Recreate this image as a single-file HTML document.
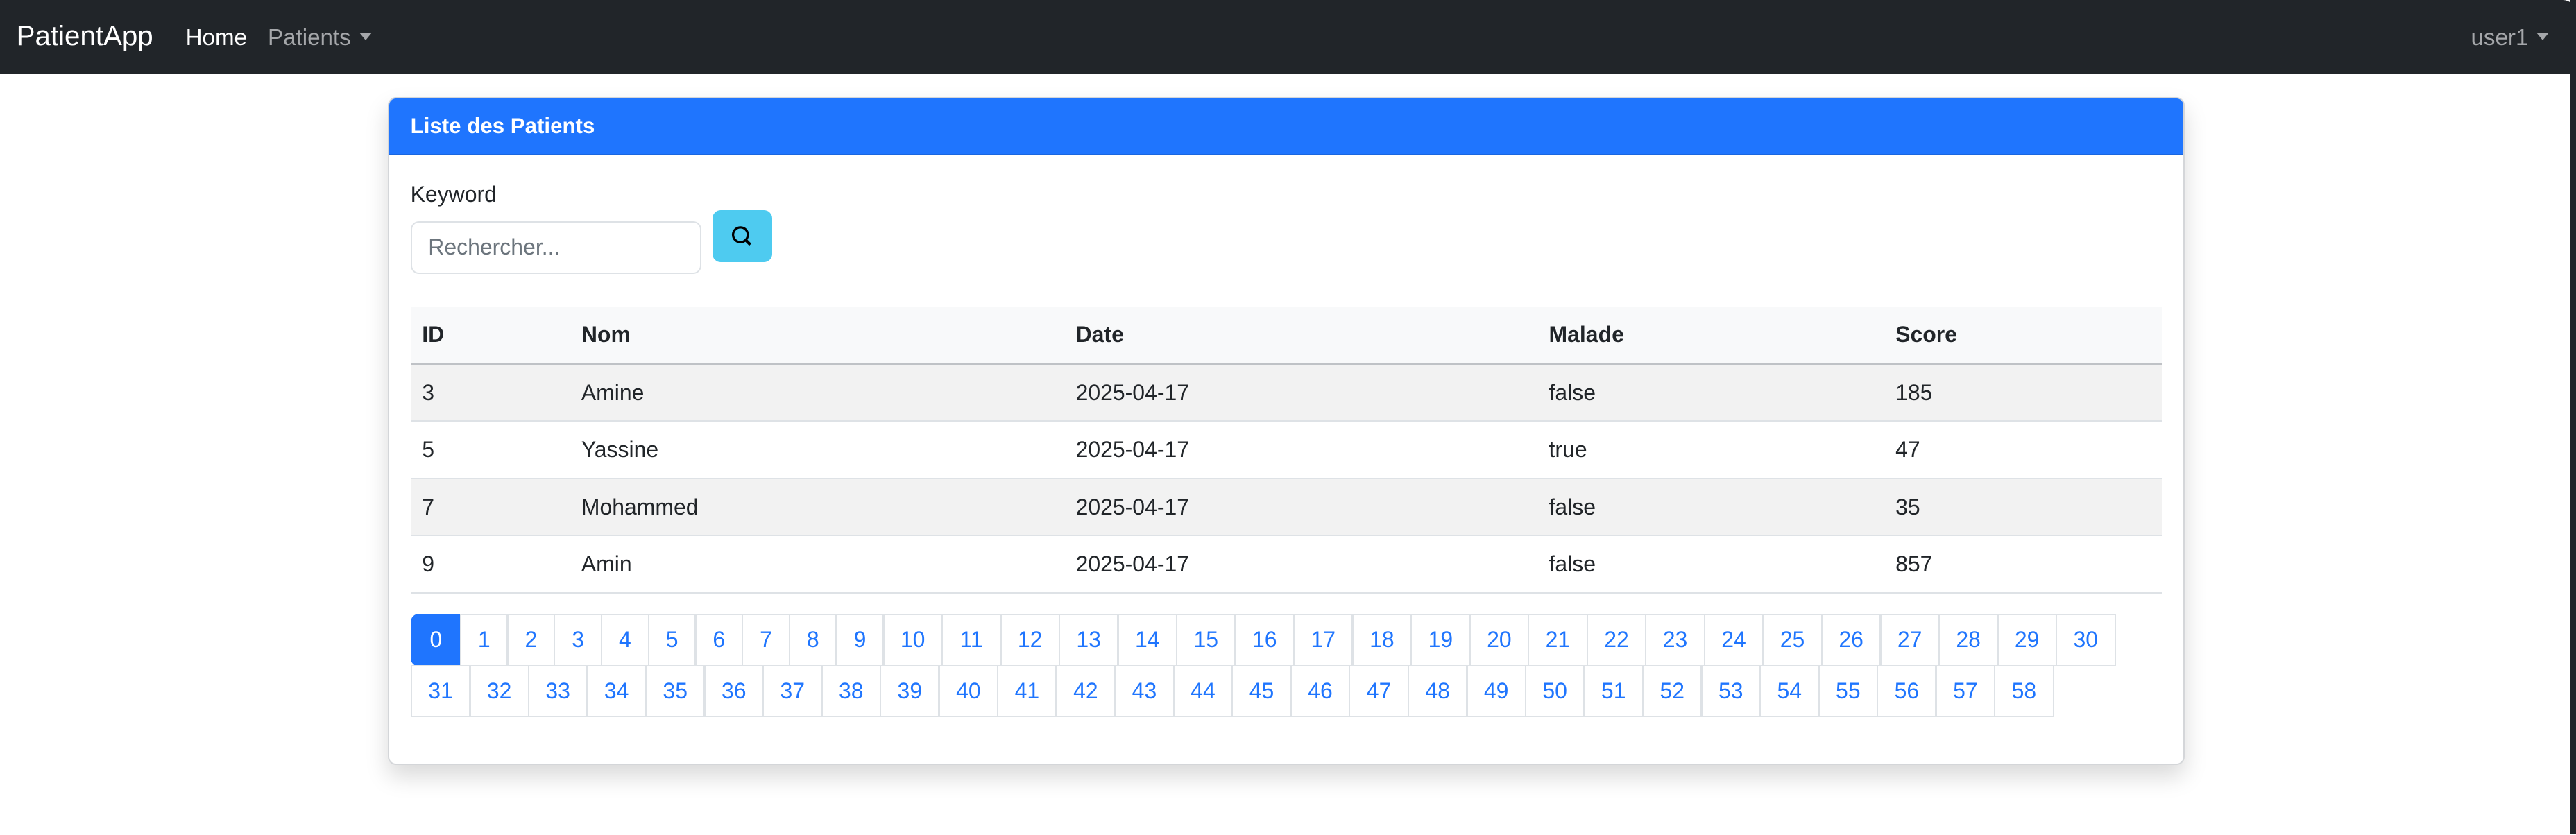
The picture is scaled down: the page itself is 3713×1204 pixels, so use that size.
<!DOCTYPE html>
<html><head><meta charset="utf-8"><style>
html,body{margin:0;padding:0;}
body{width:1568px;height:508px;zoom:2.368;overflow:hidden;background:#fff;font-family:"Liberation Sans",Arial,sans-serif;font-size:14px;color:#212529;position:relative;}
.nav{height:45px;background:#212529;position:relative;border-top-right-radius:8px;}
.nav span{position:absolute;top:13px;font-size:14px;line-height:20px;}
.brand{left:10px;color:#fff;font-size:17px!important;top:12px!important;}
.caret{display:inline-block;width:0;height:0;border-left:4px solid transparent;border-right:4px solid transparent;border-top:5px solid currentColor;vertical-align:3px;margin-left:5px;}
.edge{position:absolute;right:0;top:0;width:4px;height:508px;background:#212529;}
.card{position:absolute;left:236px;top:59px;width:1092px;height:405px;border:1px solid #d4d6d9;border-radius:5px;box-shadow:0 7px 14px rgba(0,0,0,.15);overflow:hidden;background:#fff;}
.hdr{height:34px;background:#1f75fe;border-bottom:1px solid #1a66df;color:#fff;font-weight:bold;font-size:13.2px;line-height:34px;padding-left:13px;}
.lbl{position:absolute;left:13px;top:51px;font-size:13.5px;}
.inp{position:absolute;left:13px;top:75px;width:177px;height:32px;border:1px solid #dee2e6;border-radius:5px;box-sizing:border-box;color:#6c757d;font-size:13.5px;line-height:30px;padding-left:10px;}
.btn{position:absolute;left:197px;top:68px;width:36px;height:32px;background:#4ecbf0;border-radius:5px;}
table{position:absolute;left:13px;top:127px;width:1066px;border-collapse:collapse;font-size:13.5px;}
td,th{height:34px;padding:0 7px;text-align:left;border-bottom:1px solid #dee2e6;}
th{background:#f8f9fa;border-bottom:1.5px solid #bfc2c6;}
tr.s td{background:#f2f2f2;}
.pg{position:absolute;left:13px;top:314px;width:1060px;display:flex;flex-wrap:wrap;}
.pg span{display:block;flex:none;height:32px;box-sizing:border-box;border:1px solid #dee2e6;margin:0 -1px -1px 0;color:#1f75fe;text-align:center;line-height:30px;font-size:13.5px;}
.pg span.a{background:#1f75fe;color:#fff;border-color:#1f75fe;border-radius:5px 0 0 5px;}
</style></head><body>
<div class="nav">
<span class="brand">PatientApp</span>
<span style="left:113px;color:#fff">Home</span>
<span style="left:163px;color:#a5a7aa">Patients<i class="caret"></i></span>
<span style="left:1504px;color:#a5a7aa">user1<i class="caret"></i></span>
</div>
<div class="edge"></div>
<div class="card">
<div class="hdr">Liste des Patients</div>
<div class="lbl">Keyword</div>
<div class="inp">Rechercher...</div>
<div class="btn"><svg width="36" height="32" viewBox="0 0 36 32"><circle cx="17" cy="15" r="4.5" fill="none" stroke="#000" stroke-width="1.4"/><line x1="20.2" y1="18.2" x2="23" y2="21" stroke="#000" stroke-width="1.8"/></svg></div>
<table>
<tr><th style="width:83px">ID</th><th style="width:287px">Nom</th><th style="width:274px">Date</th><th style="width:197px">Malade</th><th>Score</th></tr>
<tr class="s"><td>3</td><td>Amine</td><td>2025-04-17</td><td>false</td><td>185</td></tr>
<tr><td>5</td><td>Yassine</td><td>2025-04-17</td><td>true</td><td>47</td></tr>
<tr class="s"><td>7</td><td>Mohammed</td><td>2025-04-17</td><td>false</td><td>35</td></tr>
<tr><td>9</td><td>Amin</td><td>2025-04-17</td><td>false</td><td>857</td></tr>
</table>
<div class="pg" id="pg"></div>
</div>
<script>
var h='';for(var i=0;i<59;i++){var w=i==0?31:(i<10?29.6:36.7);h+='<span'+(i==0?' class="a"':'')+' style="width:'+w+'px">'+i+'</span>';if(i==30)h+='<div style="flex-basis:100%;height:0"></div>';}
document.getElementById('pg').innerHTML=h;
</script>
</body></html>
